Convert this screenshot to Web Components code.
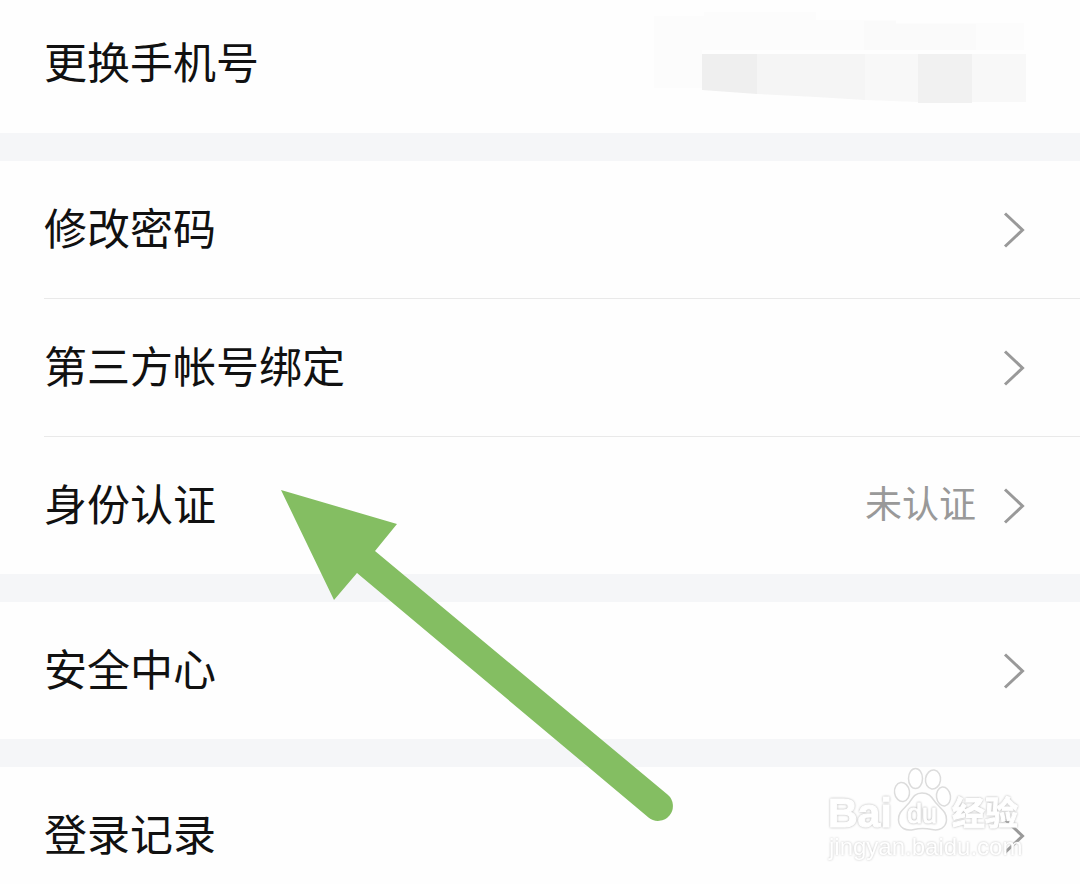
<!DOCTYPE html>
<html lang="zh-CN">
<head>
<meta charset="utf-8">
<meta name="viewport" content="width=device-width, initial-scale=1">
<title>帐号与安全</title>
<style>
  body { margin: 0; background: #fefefe; font-family: "Noto Sans CJK SC", sans-serif; }
</style>
</head>
<body>
<account-page>
  <setting-group>
    <setting-row label="更换手机号" plain><masked-phone></masked-phone></setting-row>
  </setting-group>
  <setting-group>
    <setting-row label="修改密码"></setting-row>
    <setting-row label="第三方帐号绑定"></setting-row>
    <setting-row label="身份认证">未认证</setting-row>
  </setting-group>
  <setting-group>
    <setting-row label="安全中心"></setting-row>
  </setting-group>
  <setting-group>
    <setting-row label="登录记录"></setting-row>
  </setting-group>
  <pointer-arrow slot="overlay"></pointer-arrow>
  <site-watermark slot="overlay"></site-watermark>
</account-page>

<script>
const define = (name, html, setup) => {
  const template = document.createElement('template');
  template.innerHTML = html;
  customElements.define(name, class extends HTMLElement {
    constructor() {
      super();
      this.attachShadow({ mode: 'open' }).append(template.content.cloneNode(true));
    }
    connectedCallback() { if (setup) setup(this, this.shadowRoot); }
  });
};

define('account-page', `
  <style>
    :host { display: block; position: relative; height: 100vh; overflow: hidden; }
    main { display: flex; flex-direction: column; gap: 28px; background: #f5f6f8; }
  </style>
  <main><slot></slot></main>
  <slot name="overlay"></slot>`);

define('setting-group', `
  <style>
    :host { display: block; background: #fefefe; }
    ::slotted(setting-row:not(:last-child)) { --divider: 1px solid #e9e9e9; }
  </style>
  <slot></slot>`);

define('setting-row', `
  <style>
    :host { display: block; padding-left: 44px; }
    a {
      display: flex; align-items: center; justify-content: space-between;
      height: 137px; padding-right: 54px; border-bottom: var(--divider, none);
      color: #111; text-decoration: none;
    }
    .label { font-size: 43px; line-height: 60px; padding-bottom: 8px; }
    .end { display: flex; align-items: center; gap: 26px; }
    .value { font-size: 37px; line-height: 52px; padding-bottom: 8px; color: #999; }
    svg { display: block; width: 24px; height: 40px; fill: none; stroke: #999; stroke-width: 3; }
    :host([plain]) a { height: 127px; padding-bottom: 6px; }
    :host([plain]) .value { padding: 0; }
    :host([plain]) .end { gap: 0; }
    :host([plain]) svg { display: none; }
  </style>
  <a href="#">
    <span class="label"></span>
    <span class="end"><span class="value"><slot></slot></span>
      <svg viewBox="0 0 24 40" aria-hidden="true"><path d="M3 3.500L20.500 20L3 36.500"/></svg>
    </span>
  </a>`, (host, root) => {
    root.querySelector('.label').textContent = host.getAttribute('label');
  });

define('masked-phone', `
  <style>
    :host { display: block; }
    svg { display: block; width: 372px; height: 127px; }
  </style>
  <svg viewBox="654 0 372 127" role="img" aria-label="已隐藏的手机号">
    <path fill="#fcfcfc" d="M654 32V16H704V12H816V20H896V23H1024V50H702V88H654Z"/>
    <path fill="#fafafa" d="M864 21H896V24H976V50H864Z"/>
    <path fill="#efefef" d="M702 54H757V94L702 90Z"/>
    <path fill="#f5f5f5" d="M757 54H865V100L816 97L757 94Z"/>
    <path fill="#f8f8f8" d="M865 54H918V102L865 100Z"/>
    <path fill="#f1f1f1" d="M918 54H972V103H918Z"/>
    <path fill="#f8f8f8" d="M972 54H1026V102H972Z"/>
  </svg>`);

define('pointer-arrow', `
  <style>
    :host { position: absolute; left: 281px; top: 490px; pointer-events: none; }
    svg { display: block; width: 392px; height: 332px; }
  </style>
  <svg viewBox="281 490 392 332" aria-hidden="true">
    <path fill="#84be62" d="M281 490L397 524L375 551L667.500 794.500A14.800 14.800 0 0 1 648.500 817.500L357 573L334 600Z"/>
  </svg>`);

define('site-watermark', `
  <style>
    :host { position: absolute; left: 820px; top: 764px; pointer-events: none; }
    svg { display: block; width: 210px; height: 104px; overflow: visible; }
    text { stroke: #fff; stroke-width: 1; stroke-linejoin: round; filter: drop-shadow(0 0 1px #b4b4b4); }
    .url { stroke: none; filter: drop-shadow(0 0 1px #c4c4c4); }
    .du { fill: #fff; filter: drop-shadow(0 0 1px #a8a8a8); }
  </style>
  <svg viewBox="820 764 210 104" fill="#fff">
    <g stroke-width="1.500" stroke="#dcdcdc">
      <ellipse cx="902" cy="792" rx="7.500" ry="9.500" transform="rotate(-8 902 792)"/>
      <ellipse cx="915.500" cy="778.500" rx="7" ry="10"/>
      <ellipse cx="933" cy="779.500" rx="7.500" ry="9.500" transform="rotate(8 933 779.500)"/>
      <ellipse cx="943.500" cy="796.500" rx="7" ry="9.500" transform="rotate(-8 943.500 796.500)"/>
      <path d="M922 793C930 793 932 798 936 803C941 809 947 812 946.500 820C946 828 939 831 932 829.500C925 828 920 828 914 829.500C906 831.500 899 828 898.500 820C898 812 904 809 909 803C913 797 915 793 922 793Z"/>
    </g>
    <text x="828" y="827" font-family="Liberation Sans, sans-serif" font-weight="700" font-size="41">Bai</text>
    <text class="du" x="907" y="823" font-family="Liberation Sans, sans-serif" font-size="27">du</text>
    <text x="952" y="825" font-family="Noto Sans CJK SC, sans-serif" font-weight="700" font-size="33">经验</text>
    <text class="url" x="829" y="855" font-family="Liberation Sans, sans-serif" font-size="24">jingyan.baidu.com</text>
  </svg>`);
</script>
</body>
</html>
